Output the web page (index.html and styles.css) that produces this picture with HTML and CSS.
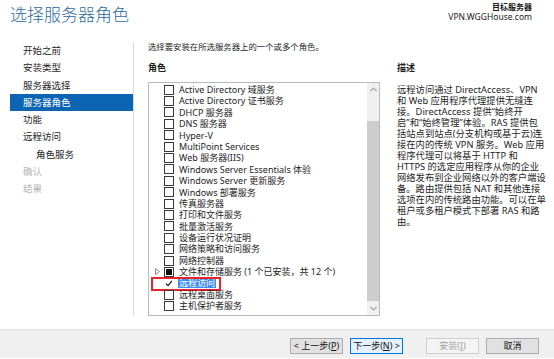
FILE: index.html
```html
<!DOCTYPE html>
<html>

<head>
    <title>选择服务器角色</title>
    <link rel="stylesheet" href="styles.css">
</head>

<body>
    <div class="header">
        <h1 class="title">选择服务器角色</h1>
        <div class="target">
            <div class="target-label">目标服务器</div>
            <div class="target-name">VPN.WGGHouse.com</div>
        </div>
    </div>

    <div class="main">
        <ul class="nav">
            <li>开始之前</li>
            <li>安装类型</li>
            <li>服务器选择</li>
            <li class="active">服务器角色</li>
            <li>功能</li>
            <li>远程访问</li>
            <li class="sub">角色服务</li>
            <li class="disabled">确认</li>
            <li class="disabled">结果</li>
        </ul>

        <div class="content">
            <p class="intro">选择要安装在所选服务器上的一个或多个角色。</p>
            <div class="columns">
                <div class="roles">
                    <div class="heading">角色</div>
                    <div class="listbox">
                        <ul class="role-list">
                            <li><span class="box"></span>Active Directory 域服务</li>
                            <li><span class="box"></span>Active Directory 证书服务</li>
                            <li><span class="box"></span>DHCP 服务器</li>
                            <li><span class="box"></span>DNS 服务器</li>
                            <li><span class="box"></span>Hyper-V</li>
                            <li><span class="box"></span>MultiPoint Services</li>
                            <li><span class="box"></span>Web 服务器(IIS)</li>
                            <li><span class="box"></span>Windows Server Essentials 体验</li>
                            <li><span class="box"></span>Windows Server 更新服务</li>
                            <li><span class="box"></span>Windows 部署服务</li>
                            <li><span class="box"></span>传真服务器</li>
                            <li><span class="box"></span>打印和文件服务</li>
                            <li><span class="box"></span>批量激活服务</li>
                            <li><span class="box"></span>设备运行状况证明</li>
                            <li><span class="box"></span>网络策略和访问服务</li>
                            <li><span class="box"></span>网络控制器</li>
                            <li>
                                <svg class="expander" width="5" height="7" viewBox="0 0 5 7">
                                    <path d="M0.5 0.5 L4.5 3.5 L0.5 6.5 Z" fill="none" stroke="#8a8a8a" stroke-width="1" />
                                </svg>
                                <span class="box partial"></span>文件和存储服务 (1 个已安装，共 12 个)
                            </li>
                            <li class="selected">
                                <span class="box checked">
                                    <svg width="9" height="9" viewBox="0 0 9 9">
                                        <path d="M1.2 4.6 L3.5 7 L7.8 1.6" fill="none" stroke="#111" stroke-width="1.3" />
                                    </svg>
                                </span><span class="sel-text">远程访问</span>
                                <span class="mark"></span>
                            </li>
                            <li><span class="box"></span>远程桌面服务</li>
                            <li><span class="box"></span>主机保护者服务</li>
                        </ul>
                        <div class="scrollbar">
                            <svg class="arrow" width="7" height="5" viewBox="0 0 7 5">
                                <path d="M0.5 4 L3.5 1 L6.5 4" fill="none" stroke="#a6a6a6" stroke-width="1.2" />
                            </svg>
                            <div class="track">
                                <div class="thumb"></div>
                            </div>
                            <svg class="arrow" width="7" height="5" viewBox="0 0 7 5">
                                <path d="M0.5 1 L3.5 4 L6.5 1" fill="none" stroke="#a6a6a6" stroke-width="1.2" />
                            </svg>
                        </div>
                    </div>
                </div>

                <div class="desc">
                    <div class="heading">描述</div>
                    <p class="desc-text">远程访问通过 DirectAccess、VPN<br>和 Web 应用程序代理提供无缝连<br>接。DirectAccess 提供“始终开<br>启”和“始终管理”体验。RAS 提供包<br>括站点到站点(分支机构或基于云)连<br>接在内的传统 VPN 服务。Web 应用<br>程序代理可以将基于 HTTP 和<br>HTTPS 的选定应用程序从你的企业<br>网络发布到企业网络以外的客户端设<br>备。路由提供包括 NAT 和其他连接<br>选项在内的传统路由功能。可以在单<br>租户或多租户模式下部署 RAS 和路<br>由。</p>
                </div>
            </div>
        </div>
    </div>

    <div class="footer">
        <button class="btn">&lt; 上一步(<u>P</u>)</button>
        <button class="btn primary">下一步(<u>N</u>) &gt;</button>
        <button class="btn install" disabled>安装(<u>I</u>)</button>
        <button class="btn">取消</button>
    </div>
</body>

</html>
```

FILE: styles.css
```css
html,
body {
    margin: 0;
    padding: 0;
}

body {
    width: 554px;
    height: 359px;
    overflow: hidden;
    background-color: #fff;
    color: #1e1e1e;
    font-family: "Noto Sans", "Noto Sans CJK SC", sans-serif;
    font-size: 10px;
}

ul {
    list-style: none;
    margin: 0;
    padding: 0;
}

p {
    margin: 0;
}

.header {
    height: 40px;
    display: flex;
    justify-content: space-between;
    align-items: flex-start;
}

.title {
    margin: 0;
    padding: 2px 0 0 10px;
    font-size: 17px;
    line-height: 24px;
    font-weight: 300;
    color: #2b6b9c;
    font-family: "Noto Sans CJK SC", sans-serif;
}

.target {
    padding: 2px 22px 0 0;
    text-align: right;
    color: #1a1a1a;
}

.target-label {
    font-size: 8px;
    line-height: 9px;
    font-weight: bold;
}

.target-name {
    font-size: 8.5px;
    line-height: 11px;
}

.main {
    height: 289px;
    display: flex;
}

.nav {
    width: 123px;
    margin: 2px 0 0 10px;
    height: 273px;
    border-right: 1px solid #dadada;
    font-size: 9.5px;
}

.nav li {
    height: 17.3px;
    line-height: 17.3px;
    padding-left: 13px;
    color: #262626;
}

.nav li.active {
    background-color: #0c64b3;
    color: #fff;
}

.nav li.sub {
    padding-left: 26px;
}

.nav li.disabled {
    color: #b4b4b4;
}

.content {
    flex: 1;
    padding-left: 14px;
}

.intro {
    line-height: 14px;
    height: 14px;
    font-size: 8.4px;
}

.columns {
    display: flex;
    gap: 17px;
    margin-top: 7px;
}

.heading {
    font-weight: bold;
    font-size: 9px;
    line-height: 14px;
    height: 14px;
}

.roles {
    width: 232px;
}

.listbox {
    margin-top: 7px;
    height: 232px;
    border: 1px solid #b9b9b9;
    display: flex;
}

.role-list {
    flex: 1;
    padding-top: 1px;
    font-size: 9px;
}

.role-list li {
    position: relative;
    height: 11.4px;
    line-height: 11.4px;
    padding-left: 15px;
    display: flex;
    align-items: center;
    white-space: nowrap;
}

.box {
    width: 8px;
    height: 8px;
    border: 1px solid #3a3a3a;
    background-color: #fff;
    margin-right: 5px;
    flex-shrink: 0;
    display: flex;
    align-items: center;
    justify-content: center;
}

.box.partial::after {
    content: "";
    width: 6px;
    height: 6px;
    background-color: #111;
}

.box.checked {
    border-color: transparent;
}

.expander {
    position: absolute;
    left: 6px;
    top: 2px;
}

.sel-text {
    background-color: #3c8ef0;
    color: #fff;
    line-height: 10px;
    padding: 0 1px;
    margin-left: -1px;
}

.mark {
    position: absolute;
    left: 2px;
    top: -1px;
    width: 66px;
    height: 10px;
    border: 2px solid #e8232b;
}

.scrollbar {
    width: 12px;
    background-color: #f0f0f0;
    display: flex;
    flex-direction: column;
    align-items: center;
}

.arrow {
    margin: 4px 0;
    flex-shrink: 0;
}

.track {
    flex: 1;
    width: 100%;
    padding: 25px 0 1px 0;
    box-sizing: border-box;
}

.thumb {
    height: 100%;
    background-color: #cdcdcd;
}

.desc {
    width: 150px;
}

.desc-text {
    margin-top: 9px;
    font-size: 9.3px;
    line-height: 11px;
    white-space: nowrap;
}

.footer {
    height: 29px;
    border-top: 1px solid #e3e3e3;
    background-color: #f0f0f0;
    display: flex;
    justify-content: flex-end;
    align-items: flex-start;
    gap: 7px;
    padding: 8px 15px 0 0;
    box-sizing: border-box;
}

.btn {
    width: 53px;
    height: 16px;
    padding: 0;
    border: 1px solid #adadad;
    background-color: #e1e1e1;
    color: #111;
    font-family: "Noto Sans", "Noto Sans CJK SC", sans-serif;
    font-size: 9px;
    line-height: 14px;
}

.btn.primary {
    border-color: #0078d7;
    background-color: #e5f1fb;
}

.btn.install {
    margin-left: 16px;
    border-color: #cfcfcf;
    background-color: #f4f4f4;
    color: #a2a2a2;
}
```
